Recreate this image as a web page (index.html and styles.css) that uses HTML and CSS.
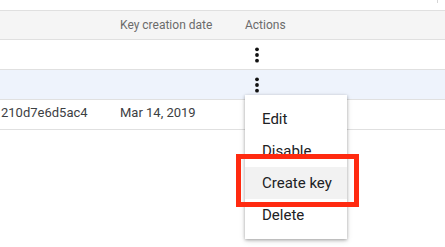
FILE: index.html
```html
<!DOCTYPE html>
<html lang="en">
<head>
    <meta charset="UTF-8">
    <title>Keys</title>
    <link rel="stylesheet" href="styles.css">
</head>
<body>
    <div class="topbar"><span class="tick"></span></div>
    <div class="keys">
        <div class="row head">
            <div class="col id"></div>
            <div class="col date">Key creation date</div>
            <div class="col actions">Actions</div>
        </div>
        <div class="row">
            <div class="col id"></div>
            <div class="col date"></div>
            <div class="col actions">
                <svg class="kebab" width="6" height="16" viewBox="0 0 6 16"><circle cx="3" cy="2.3" r="1.9"/><circle cx="3" cy="8" r="1.9"/><circle cx="3" cy="13.7" r="1.9"/></svg>
            </div>
        </div>
        <div class="row hover">
            <div class="col id"></div>
            <div class="col date"></div>
            <div class="col actions">
                <svg class="kebab" width="6" height="16" viewBox="0 0 6 16"><circle cx="3" cy="2.3" r="1.9"/><circle cx="3" cy="8" r="1.9"/><circle cx="3" cy="13.7" r="1.9"/></svg>
            </div>
        </div>
        <div class="row data">
            <div class="col id">210d7e6d5ac4</div>
            <div class="col date">Mar 14, 2019</div>
            <div class="col actions"></div>
        </div>
    </div>

    <div class="menu">
        <div class="item">Edit</div>
        <div class="item">Disable</div>
        <div class="item active">Create key</div>
        <div class="item">Delete</div>
    </div>
    <div class="callout"></div>
</body>
</html>
```

FILE: styles.css
```css
body {
    margin: 0;
    font-family: Roboto, "Liberation Sans", sans-serif;
    background: #fff;
    color: #3c4043;
}
.topbar {
    height: 10px;
    position: relative;
}
.tick {
    position: absolute;
    left: 437px;
    top: 0;
    width: 1px;
    height: 3px;
    background: #d6d6d6;
}
.keys {
    border-top: 1px solid #e0e0e0;
}
.row {
    display: flex;
    height: 29px;
    border-bottom: 1px solid #e0e0e0;
    font-size: 13px;
    align-items: center;
}
.row.head {
    height: 28px;
    background: #f5f5f5;
    color: #6b6b6b;
    font-size: 12px;
}
.row.hover {
    background: #eef3fc;
}
.row.data {
    align-items: flex-start;
    padding-top: 3px;
    height: 26px;
    line-height: 20px;
}
.col.id {
    width: 120px;
    padding-left: 1px;
    box-sizing: border-box;
}
.col.date {
    width: 125px;
}
.col.actions {
    flex: 1;
    display: flex;
}
.kebab {
    margin-left: 9px;
    fill: #111;
}
.menu {
    position: absolute;
    left: 245px;
    top: 95px;
    width: 102px;
    padding: 8px 0;
    background: #fff;
    box-shadow: 0 1px 3px rgba(0,0,0,0.3), 0 2px 6px rgba(0,0,0,0.12);
}
.item {
    height: 32px;
    line-height: 32px;
    padding-left: 17px;
    font-size: 15px;
    color: #202124;
}
.item.active {
    background: #f2f2f2;
}
.callout {
    position: absolute;
    left: 236px;
    top: 154px;
    width: 113px;
    height: 43px;
    border: 5px solid #ff2a10;
}
```
